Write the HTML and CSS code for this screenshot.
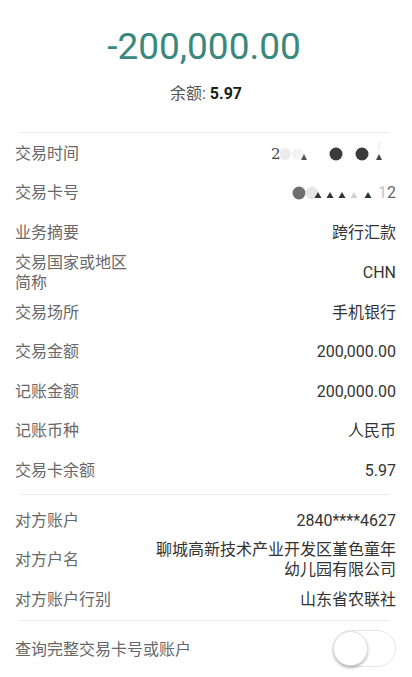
FILE: index.html
```html
<!DOCTYPE html>
<html lang="zh-CN">
<head>
<meta charset="utf-8">
<title>交易详情</title>
<link rel="stylesheet" href="styles.css">
</head>
<body>
<div class="page">
  <header class="summary">
    <div class="amount">-200,000.00</div>
    <div class="balance">余额: <b>5.97</b></div>
  </header>

  <hr class="divider divider-top">

  <section class="list list-first">
    <div class="row">
      <div class="label">交易时间</div>
      <div class="value masked">
        <span class="m-dark">2</span>
        <svg class="mask mask-time" width="116" height="24" viewBox="0 0 116 24">
          <circle cx="5" cy="12" r="6" fill="#ececec"/>
          <circle cx="18" cy="12" r="6" fill="#f4f4f4"/>
          <polygon points="21,18 24,12 27,18" fill="#555"/>
          <circle cx="56" cy="12" r="6.5" fill="#3b3b3b"/>
          <circle cx="82" cy="12" r="6.5" fill="#3b3b3b"/>
          <line x1="99" y1="0" x2="99" y2="8" stroke="#e2e2e2" stroke-width="1"/>
          <polygon points="96,18 99,12 102,18" fill="#444"/>
        </svg>
      </div>
    </div>
    <div class="row">
      <div class="label">交易卡号</div>
      <div class="value masked">
        <svg class="mask mask-card" width="86" height="24" viewBox="0 0 86 24">
          <circle cx="7" cy="12" r="6.5" fill="#6e6e6e"/>
          <circle cx="20" cy="12" r="6.5" fill="#e6e6e6"/>
          <polygon points="22.5,17 26,11 29.5,17" fill="#333"/>
          <polygon points="34.5,17 38,11 41.5,17" fill="#333"/>
          <polygon points="46.5,17 50,11 53.5,17" fill="#333"/>
          <polygon points="58.5,17 62,11 65.5,17" fill="#d0d0d0"/>
          <polygon points="72.5,17 76,11 79.5,17" fill="#333"/>
        </svg>
        <span class="m-light">1</span><span class="m-mid">2</span>
      </div>
    </div>
    <div class="row">
      <div class="label">业务摘要</div>
      <div class="value">跨行汇款</div>
    </div>
    <div class="row">
      <div class="label">交易国家或地区简称</div>
      <div class="value">CHN</div>
    </div>
    <div class="row">
      <div class="label">交易场所</div>
      <div class="value">手机银行</div>
    </div>
    <div class="row">
      <div class="label">交易金额</div>
      <div class="value">200,000.00</div>
    </div>
    <div class="row">
      <div class="label">记账金额</div>
      <div class="value">200,000.00</div>
    </div>
    <div class="row">
      <div class="label">记账币种</div>
      <div class="value">人民币</div>
    </div>
    <div class="row">
      <div class="label">交易卡余额</div>
      <div class="value">5.97</div>
    </div>
  </section>

  <hr class="divider divider-mid">

  <section class="list list-second">
    <div class="row">
      <div class="label">对方账户</div>
      <div class="value">2840****4627</div>
    </div>
    <div class="row">
      <div class="label">对方户名</div>
      <div class="value value-wide">聊城高新技术产业开发区堇色童年幼儿园有限公司</div>
    </div>
    <div class="row">
      <div class="label">对方账户行别</div>
      <div class="value">山东省农联社</div>
    </div>
  </section>

  <hr class="divider divider-bottom">

  <div class="toggle-row">
    <div class="toggle-label">查询完整交易卡号或账户</div>
    <div class="switch"><span class="knob"></span></div>
  </div>
</div>
</body>
</html>
```

FILE: styles.css
```css
html, body {
  margin: 0;
  padding: 0;
  background: #ffffff;
}

body {
  font-family: Roboto, "Noto Sans CJK SC", sans-serif;
  color: #333333;
}

.page {
  width: 412px;
}

.summary {
  display: flex;
  flex-direction: column;
  align-items: center;
  padding-top: 25px;
}

.amount {
  font-size: 37px;
  line-height: 44px;
  color: #3a887d;
  font-weight: 400;
  padding-right: 4px;
}

.balance {
  margin-top: 15px;
  font-size: 16px;
  line-height: 20px;
  color: #555555;
}

.balance b {
  font-weight: 700;
  color: #142414;
}

.divider {
  border: 0;
  height: 1px;
  background: #ececec;
  margin: 0 22px 0 20px;
}

.divider-top {
  margin-top: 28px;
}

.list {
  display: flex;
  flex-direction: column;
}

.list-first {
  padding-top: 1px;
  padding-bottom: 3px;
}

.list-second {
  padding-top: 6px;
}

.row {
  display: flex;
  align-items: center;
  justify-content: space-between;
  min-height: 39.6px;
  padding: 0 16px 0 15px;
  font-size: 16px;
  line-height: 20px;
}

.label {
  color: #686868;
  max-width: 120px;
}

.value {
  color: #333333;
  text-align: right;
}

.value-wide {
  max-width: 244px;
}

.masked {
  display: flex;
  align-items: center;
}

.mask {
  display: block;
}

.m-dark {
  color: #444444;
  font-family: "DejaVu Serif", serif;
  font-size: 15px;
  width: 9px;
}

.m-light {
  color: #c4c4c4;
}

.m-mid {
  color: #666666;
}

.divider-bottom {
  margin-top: 0;
}

.toggle-row {
  display: flex;
  align-items: center;
  justify-content: space-between;
  height: 56px;
  padding: 0 16px 0 15px;
}

.toggle-label {
  font-size: 16px;
  line-height: 20px;
  color: #686868;
  padding-top: 3px;
}

.switch {
  width: 61px;
  height: 35px;
  border: 1px solid #e4e4e4;
  border-radius: 19px;
  background: #ffffff;
  display: flex;
  align-items: center;
}

.knob {
  width: 33px;
  height: 33px;
  border-radius: 50%;
  background: #ffffff;
  border: 1px solid #e0e0e0;
  box-shadow: 0 2px 3px rgba(0, 0, 0, 0.28);
  margin-left: -1px;
}
```
